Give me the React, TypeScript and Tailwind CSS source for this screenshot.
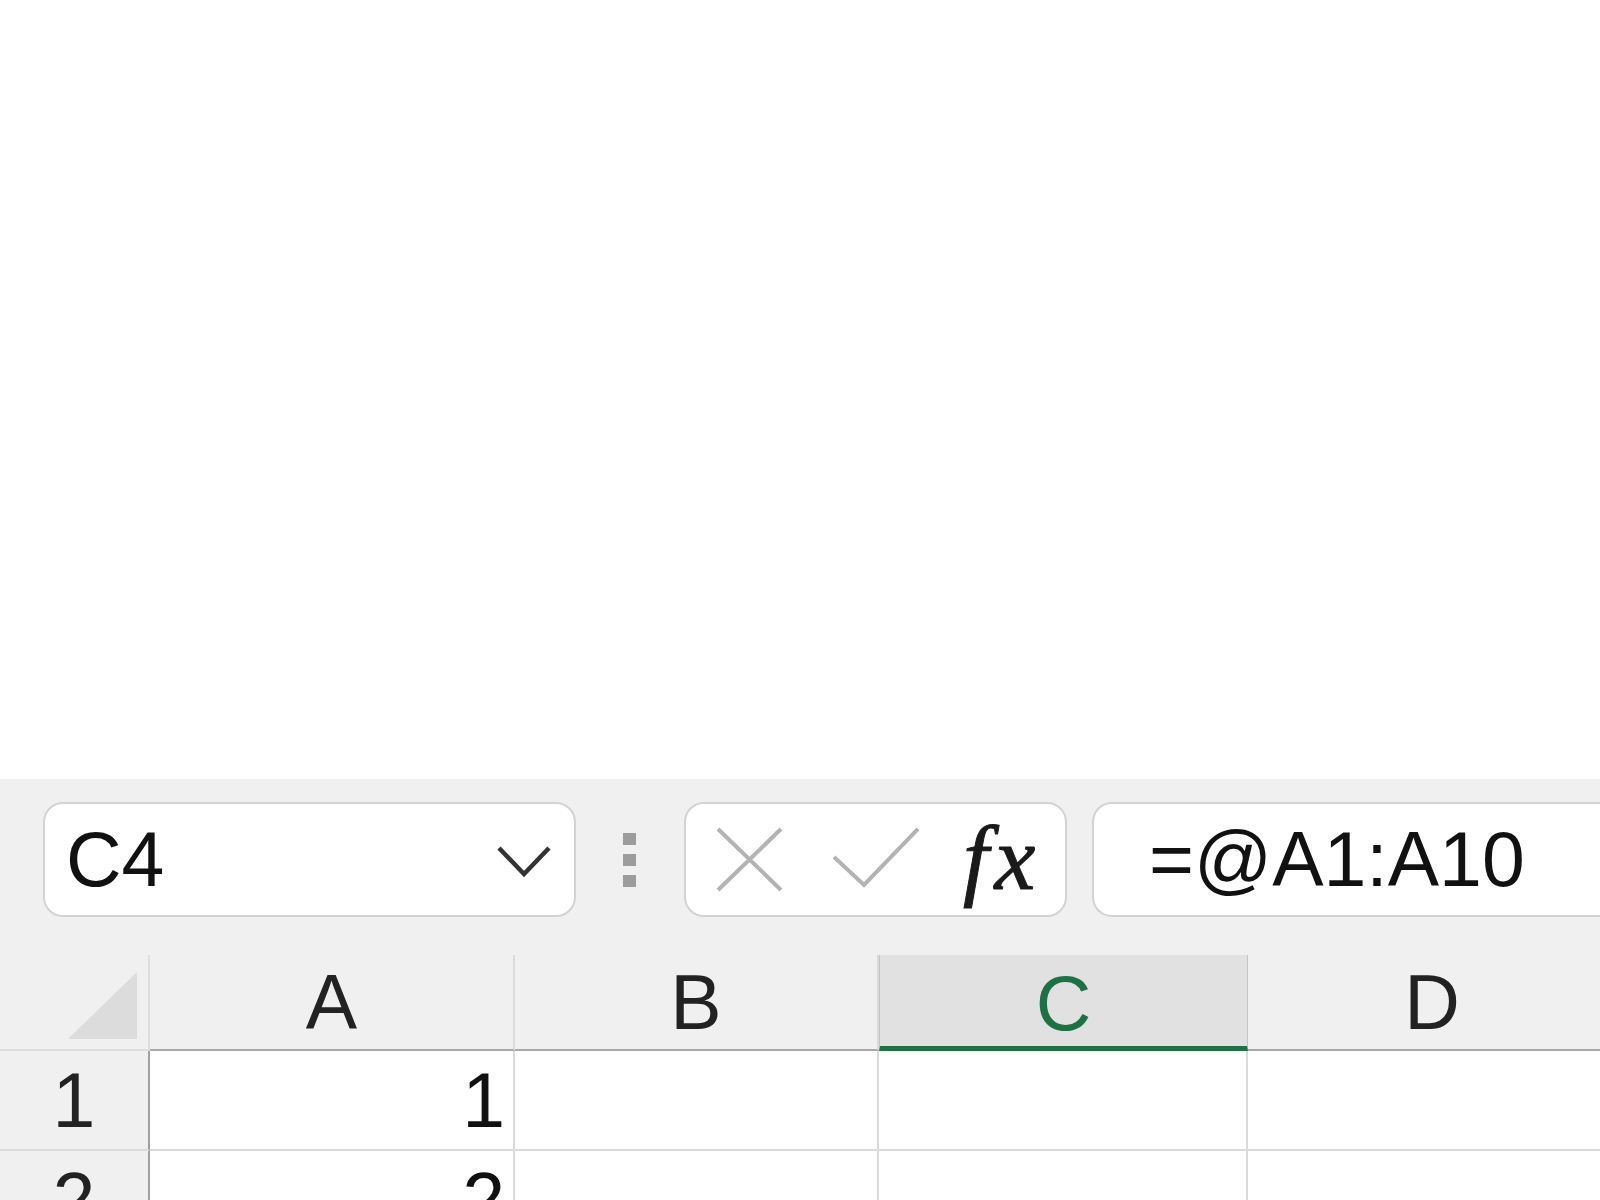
import React from "react";

const sans = "font-['Liberation_Sans',Arial,sans-serif]";

function Chevron() {
  return (
    <svg width="56" height="36" viewBox="0 0 56 36" className="mt-[5px]">
      <path d="M3 4 L28 30 L53 4" fill="none" stroke="#333333" strokeWidth="4.5" />
    </svg>
  );
}

function XIcon() {
  return (
    <svg width="67" height="65" viewBox="0 0 67 65">
      <path d="M2 2 L65 63 M65 2 L2 63" fill="none" stroke="#b3b3b3" strokeWidth="4" />
    </svg>
  );
}

function CheckIcon() {
  return (
    <svg width="86" height="62" viewBox="0 0 86 62">
      <path d="M1 30 L31 58 L85 2" fill="none" stroke="#b3b3b3" strokeWidth="4" />
    </svg>
  );
}

function Corner() {
  return (
    <svg width="70" height="68" viewBox="0 0 70 68" className="absolute left-[68px] top-[17px]">
      <polygon points="69,0 69,67 0,67" fill="#dcdcdc" />
    </svg>
  );
}

export default function App() {
  const cols = ["A", "B", "C", "D"];
  return (
    <div className={`w-[1600px] h-[1200px] overflow-hidden bg-white flex flex-col ${sans}`}>
      <div className="h-[779px] shrink-0 bg-white" />
      <div className="flex-1 bg-[#f0f0f0] flex flex-col overflow-hidden">
        {/* formula bar */}
        <div className="flex items-center pt-[23px] pl-[43px]">
          <div className="w-[533px] h-[115px] shrink-0 rounded-[20px] border-2 border-[#d3d3d3] bg-white flex items-center justify-between pl-[21px] pr-[22px]">
            <span className="text-[77px] leading-none text-[#111]">C4</span>
            <Chevron />
          </div>
          <div className="ml-[47px] flex flex-col gap-[9px] shrink-0">
            <div className="w-[13px] h-[12px] bg-[#9c9c9c]" />
            <div className="w-[13px] h-[12px] bg-[#9c9c9c]" />
            <div className="w-[13px] h-[12px] bg-[#9c9c9c]" />
          </div>
          <div className="ml-[48px] w-[383px] h-[115px] shrink-0 rounded-[20px] border-2 border-[#d3d3d3] bg-white flex items-center pl-[30px]">
            <XIcon />
            <div className="ml-[50px] -mt-[3px]">
              <CheckIcon />
            </div>
            <span className="ml-[44px] -mt-[4px] font-['Liberation_Serif',serif] italic text-[92px] leading-none tracking-[6px] text-[#1a1a1a] [-webkit-text-stroke:1px_#1a1a1a]">
              fx
            </span>
          </div>
          <div className="ml-[25px] w-[600px] h-[115px] shrink-0 rounded-l-[20px] border-2 border-r-0 border-[#d3d3d3] bg-white flex items-center pl-[55px]">
            <span className="text-[77px] leading-none text-[#111]">=@A1:A10</span>
          </div>
        </div>

        {/* grid */}
        <div className="mt-[38px] grid grid-cols-[150px_365px_364px_369px_370px] w-[1618px]">
          {/* header row */}
          <div className="relative h-[96px] border-r-2 border-b-2 border-[#dedede]">
            <Corner />
          </div>
          {cols.map((c) =>
            c === "C" ? (
              <div
                key={c}
                className="h-[96px] bg-[#e1e1e1] border-x border-[#c4c4c4] border-b-[5px] border-b-[#1e7145] flex items-center justify-center"
              >
                <span className="text-[77px] leading-none text-[#1e7145] mt-[5px]">C</span>
              </div>
            ) : (
              <div
                key={c}
                className="h-[96px] border-r-2 border-r-[#dadada] border-b-2 border-b-[#a9a9a9] flex items-center justify-center"
              >
                <span className="text-[77px] leading-none text-[#222]">{c}</span>
              </div>
            )
          )}
          {/* rows */}
          {[1, 2].map((r) => (
            <React.Fragment key={r}>
              <div className="h-[100px] border-r-2 border-r-[#a0a0a0] border-b-2 border-b-[#dcdcdc] bg-[#f0f0f0] flex items-center justify-center">
                <span className="text-[77px] leading-none text-[#222]">{r}</span>
              </div>
              {cols.map((c) => (
                <div
                  key={c}
                  className="h-[100px] bg-white border-r-2 border-b-2 border-[#dadada] flex items-center justify-end pr-[8px]"
                >
                  {c === "A" ? (
                    <span className="text-[77px] leading-none text-[#111]">{r}</span>
                  ) : null}
                </div>
              ))}
            </React.Fragment>
          ))}
        </div>
      </div>
    </div>
  );
}
